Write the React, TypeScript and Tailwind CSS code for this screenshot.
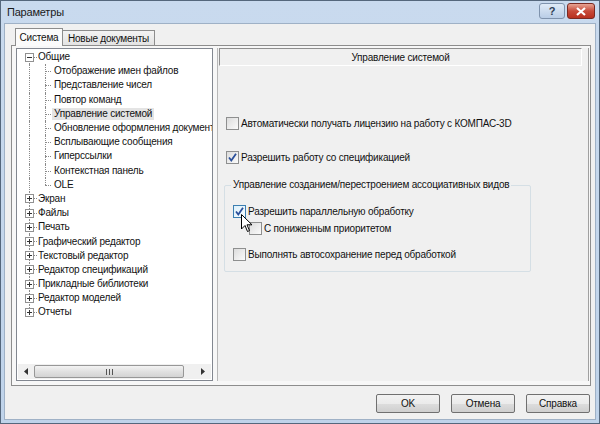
import React from "react";

const F = { fontFamily: '"Liberation Sans", Arial, sans-serif' };
const T = "text-[10px] tracking-[-0.2px] text-[#111]";

function Check({ checked = false, focus = false }: { checked?: boolean; focus?: boolean }) {
  return (
    <div
      className={`w-[13px] h-[13px] shrink-0 border flex items-center justify-center ${
        focus ? "border-[#3c7fb1] bg-[linear-gradient(135deg,#dff1fb,#f4fbff)]" : "border-[#8e8f8f] bg-[linear-gradient(135deg,#dcdcdc,#fbfbfb)]"
      }`}
    >
      {checked && (
        <svg width="11" height="11" viewBox="0 0 11 11">
          <path d="M2 5.5 L4.3 8.5 L9 1.8" fill="none" stroke="#2a4f9a" strokeWidth="1.8" />
        </svg>
      )}
    </div>
  );
}

function Expander({ open }: { open: boolean }) {
  return (
    <div className="w-[9px] h-[9px] border border-[#919191] bg-white flex items-center justify-center relative shrink-0">
      <div className="w-[5px] h-[1px] bg-[#333]" />
      {!open && <div className="absolute w-[1px] h-[5px] bg-[#333] left-[3px] top-[1px]" />}
    </div>
  );
}

const top = ["Экран", "Файлы", "Печать", "Графический редактор", "Текстовый редактор", "Редактор спецификаций", "Прикладные библиотеки", "Редактор моделей", "Отчеты"];
const kids = [
  "Отображение имен файлов",
  "Представление чисел",
  "Повтор команд",
  "Управление системой",
  "Обновление оформления документ",
  "Всплывающие сообщения",
  "Гиперссылки",
  "Контекстная панель",
  "OLE",
];

function VLine({ half }: { half?: boolean }) {
  return (
    <div
      className={`absolute left-[4px] w-0 border-l border-dotted border-[#8a8a8a] ${half ? "top-0 h-1/2" : "top-0 bottom-0"}`}
    />
  );
}

function TopRow({ label, open, first, last }: { label: string; open: boolean; first?: boolean; last?: boolean }) {
  return (
    <div className="h-[14.2px] flex items-center">
      <div className="relative w-[9px] h-full ml-[8px] flex items-center shrink-0">
        {!first && <div className="absolute left-[4px] top-0 h-1/2 w-0 border-l border-dotted border-[#8a8a8a]" />}
        {!last && <div className="absolute left-[4px] top-1/2 bottom-0 w-0 border-l border-dotted border-[#8a8a8a]" />}
        <div className="relative z-10">
          <Expander open={open} />
        </div>
      </div>
      <div className="w-[3px] shrink-0 border-t border-dotted border-[#8a8a8a] mr-[1px]" />
      <span className={`${T} leading-none whitespace-nowrap`}>{label}</span>
    </div>
  );
}

function KidRow({ label, last, sel }: { label: string; last?: boolean; sel?: boolean }) {
  return (
    <div className="h-[14.2px] flex items-center">
      <div className="relative w-[9px] h-full ml-[8px] shrink-0">
        <VLine />
      </div>
      <div className="relative w-[11px] h-full ml-[7px] shrink-0">
        <VLine half={last} />
        <div className="absolute left-[4px] top-1/2 w-[6px] border-t border-dotted border-[#8a8a8a]" />
      </div>
      <span className={`${T} leading-none whitespace-nowrap px-[2px] py-[1px] ${sel ? "bg-[#e4e4e4]" : ""}`}>{label}</span>
    </div>
  );
}

function Btn({ children }: { children: React.ReactNode }) {
  return (
    <div className={`w-[64px] h-[19px] border border-[#707070] rounded-[2px] bg-[linear-gradient(#f2f2f2,#ebebeb_50%,#dddddd_51%,#cfcfcf)] flex items-center justify-center ${T}`}>
      {children}
    </div>
  );
}

export default function App() {
  return (
    <div className="w-[600px] h-[424px] overflow-hidden bg-[linear-gradient(#c9daee,#bfd3ea)] border border-[#55677c] flex flex-col" style={F}>
      {/* Title bar */}
      <div className="h-[22px] shrink-0 flex items-center pl-[6px] pr-[4px]">
        <span className="text-[11px] tracking-[-0.2px] text-[#1b1b1b]">Параметры</span>
        <div className="ml-auto flex items-start h-full pt-[2px] gap-[2px]">
          <div className="w-[26px] h-[16px] rounded-[3px] border border-[#7f93ad] bg-[linear-gradient(#e0ebf7,#b9cde6)] flex items-center justify-center">
            <span className="text-[11px] font-bold text-[#2f3e55] leading-none">?</span>
          </div>
          <div className="w-[28px] h-[16px] rounded-[3px] border border-[#7a2a22] bg-[linear-gradient(#e8a493,#c74b3a_50%,#b8301f)] flex items-center justify-center">
            <svg width="12" height="9" viewBox="0 0 12 9">
              <path d="M2 1 L10 8 M10 1 L2 8" stroke="#fff" strokeWidth="2.2" />
            </svg>
          </div>
        </div>
      </div>

      {/* Client area */}
      <div className="flex-1 ml-[3px] mr-[3px] mb-[3px] bg-[#f0f0f0] border border-[#9fb1c6] flex flex-col">
        {/* Tabs */}
        <div className="flex items-end h-[21px] pl-[10px] pt-[3px]">
          <div className={`relative z-10 h-[18px] -mb-[1px] border border-b-0 border-[#8d8d8d] bg-[#fbfbfb] flex items-center w-[48px] justify-center ${T}`}>
            Система
          </div>
          <div className={`h-[15px] w-[92px] border border-b-0 border-l-0 border-[#8d8d8d] bg-[linear-gradient(#f3f3f3,#e3e3e3)] flex items-center justify-center ${T}`}>
            Новые документы
          </div>
        </div>

        {/* Tab panel */}
        <div className="h-[341px] ml-[6px] mr-[4px] border border-[#8d8d8d] bg-[#f7f7f7] flex pl-[4px] pt-[2px] pb-[4px] pr-[1px] gap-[4px]">
          {/* Tree */}
          <div className="w-[197px] h-full bg-white border border-[#828790] flex flex-col overflow-hidden">
            <div className="flex-1 pt-[1px] overflow-hidden">
              <TopRow label="Общие" open first />
              {kids.map((k, i) => (
                <KidRow key={k} label={k} last={i === kids.length - 1} sel={k === "Управление системой"} />
              ))}
              {top.map((t, i) => (
                <TopRow key={t} label={t} open={false} last={i === top.length - 1} />
              ))}
            </div>
            {/* Horizontal scrollbar */}
            <div className="h-[15px] mx-[1px] mb-[1px] bg-[#f0f0f0] flex items-center">
              <div className="w-[16px] flex justify-center">
                <svg width="4" height="7" viewBox="0 0 4 7"><path d="M4 0 L0 3.5 L4 7 Z" fill="#333" /></svg>
              </div>
              <div className="w-[150px] h-[13px] rounded-[2px] border border-[#979797] bg-[linear-gradient(#f3f3f3,#e1e1e1_50%,#d3d3d3)] flex items-center justify-center gap-[1px]">
                <div className="w-[1px] h-[6px] bg-[#555]" />
                <div className="w-[1px] h-[6px] bg-[#555] ml-[1px]" />
                <div className="w-[1px] h-[6px] bg-[#555] ml-[1px]" />
              </div>
              <div className="flex-1 flex justify-end pr-[6px]">
                <svg width="4" height="7" viewBox="0 0 4 7"><path d="M0 0 L4 3.5 L0 7 Z" fill="#333" /></svg>
              </div>
            </div>
          </div>

          {/* Right area */}
          <div className="flex-1 h-full border-l border-[#b8b8b8] border-r border-r-[#a0a0a0] bg-[#f0f0f0] flex flex-col relative">
            <div className={`h-[18px] border-t border-l border-[#8f8f8f] border-b border-b-[#ffffff] border-r border-r-[#ffffff] mr-[6px] ml-[1px] flex items-center justify-center bg-[#f0f0f0] ${T}`}>
              Управление системой
            </div>

            <div className="pl-[8px] mt-[50px] flex items-center gap-[2px] h-[15px]">
              <Check />
              <span className={T}>Автоматически получать лицензию на работу с КОМПАС-3D</span>
            </div>
            <div className="pl-[8px] mt-[19px] flex items-center gap-[2px] h-[15px]">
              <Check checked />
              <span className={T}>Разрешить работу со спецификацией</span>
            </div>

            {/* Group box */}
            <div className="relative ml-[6px] mt-[20px] w-[307px] h-[87px] border border-[#d5dfe5] rounded-[2px] pt-[18px] pl-[8px]">
              <span className={`absolute -top-[8px] left-[6px] px-[2px] bg-[#f0f0f0] leading-[14px] whitespace-nowrap ${T}`}>
                Управление созданием/перестроением ассоциативных видов
              </span>
              <div className="flex items-center gap-[2px] h-[15px]">
                <Check checked focus />
                <span className={T}>Разрешить параллельную обработку</span>
              </div>
              <div className="flex items-center gap-[2px] ml-[16px] mt-[2px] h-[15px]">
                <Check />
                <span className={T}>С пониженным приоритетом</span>
              </div>
              <div className="flex items-center gap-[2px] mt-[11px] h-[15px]">
                <Check />
                <span className={T}>Выполнять автосохранение перед обработкой</span>
              </div>
              {/* mouse cursor */}
              <svg className="absolute left-[16px] top-[28px]" width="12" height="19" viewBox="0 0 12 19">
                <path d="M0.5 0.5 L0.5 15 L4 11.5 L6.5 17.5 L8.5 16.6 L6 10.8 L11 10.8 Z" fill="#fff" stroke="#000" strokeWidth="1" />
              </svg>
            </div>
          </div>
        </div>

        {/* Buttons */}
        <div className="flex justify-end gap-[11px] mt-[8px] mr-[5px]">
          <Btn>OK</Btn>
          <Btn>Отмена</Btn>
          <Btn>Справка</Btn>
        </div>
      </div>
    </div>
  );
}
